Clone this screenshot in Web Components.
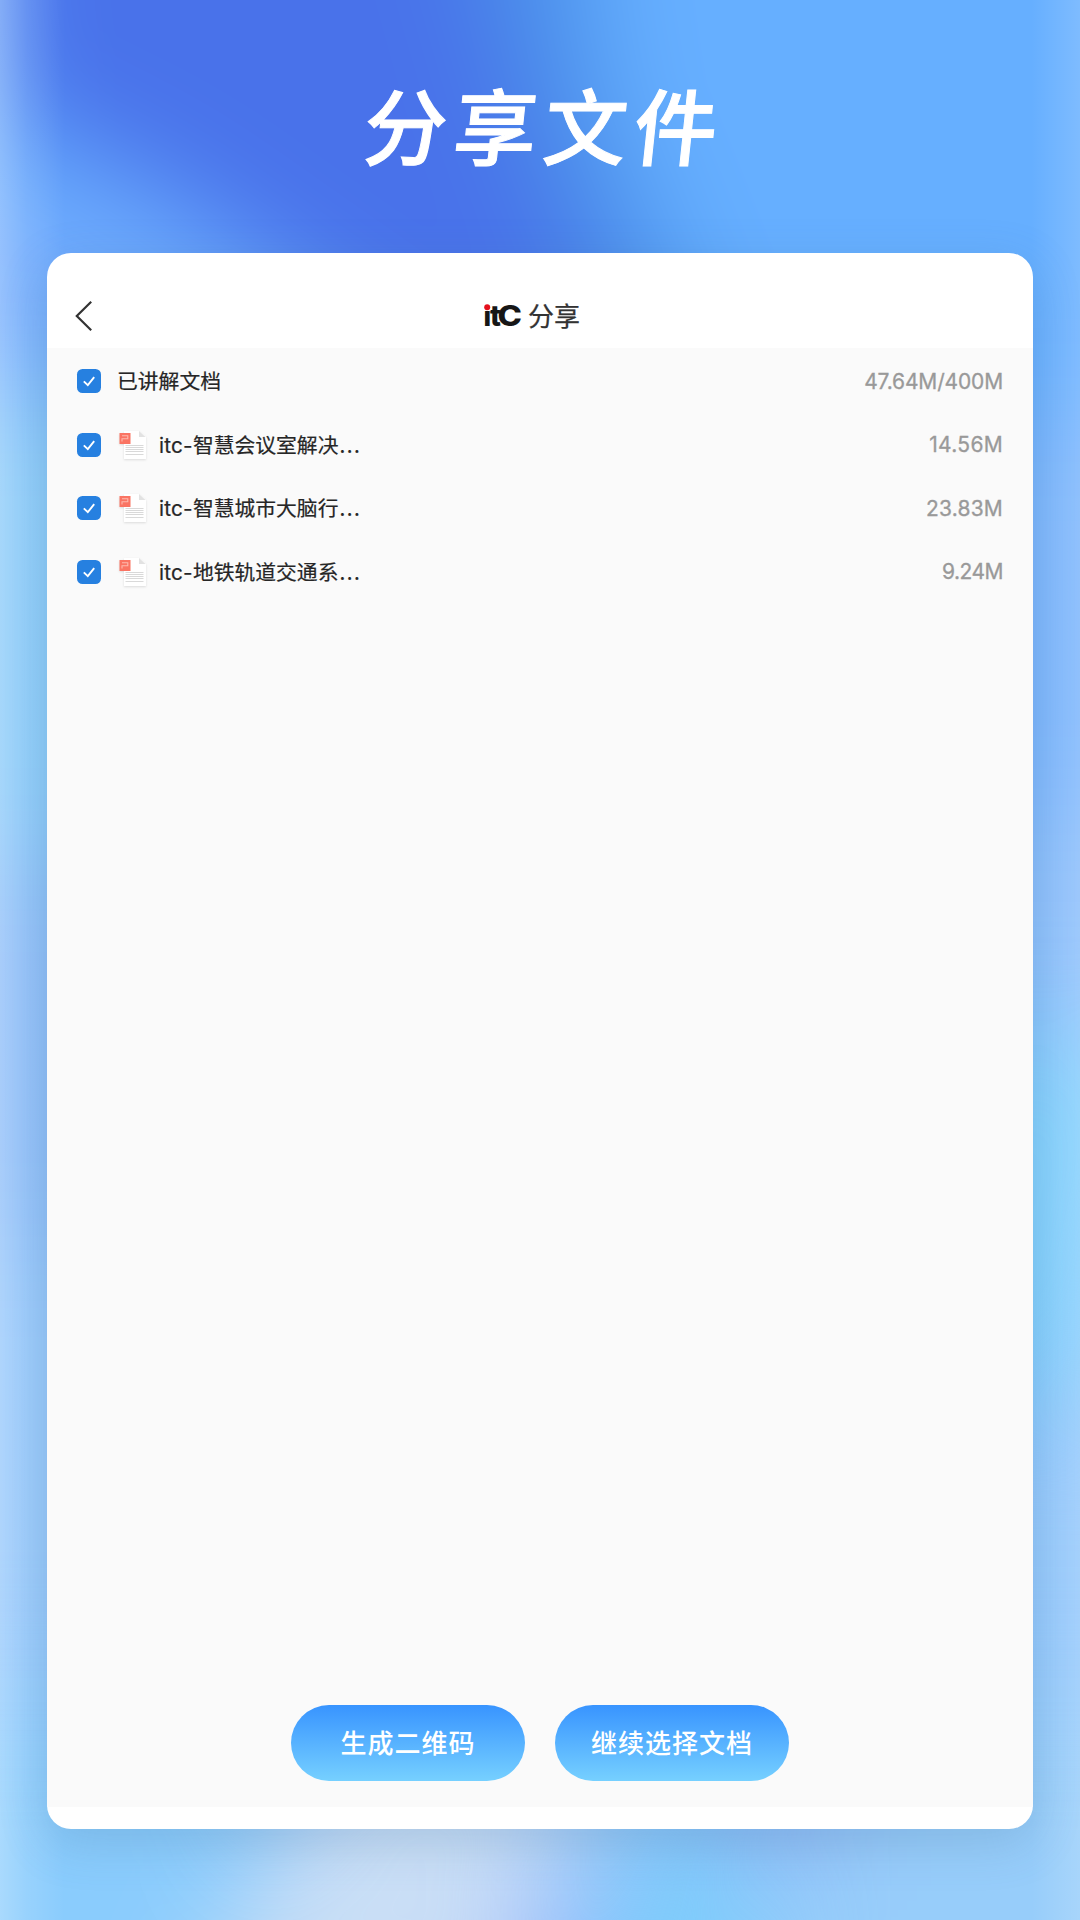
<!DOCTYPE html>
<html lang="zh-CN">
<head>
<meta charset="utf-8">
<title>分享文件</title>
<style>
  html, body { margin: 0; height: 100%; overflow: hidden; }
  body { font-family: "Noto Sans CJK SC", sans-serif; }
</style>
</head>
<body>
<share-page heading="分享文件">
  <share-panel>
    <share-row label="已讲解文档" size="47.64M/400M" spacing="-0.15"></share-row>
    <share-row file label="智慧会议室解决" size="14.56M" spacing="0.3"></share-row>
    <share-row file label="智慧城市大脑行" size="23.83M" spacing="0.2"></share-row>
    <share-row file label="地铁轨道交通系" size="9.24M" spacing="-0.5"></share-row>
    <pill-button slot="actions">生成二维码</pill-button>
    <pill-button slot="actions">继续选择文档</pill-button>
  </share-panel>
</share-page>

<script>
class BlurBackdrop extends HTMLElement {
  constructor() {
    super();
    this.attachShadow({ mode: 'open' }).innerHTML = `
      <style>
        :host { display: block; overflow: hidden; }
        svg { display: block; width: 100%; height: 100%; }
      </style>
      <svg viewBox="0 0 1080 1920" preserveAspectRatio="none">
        <defs>
          <filter id="soft" filterUnits="userSpaceOnUse" x="-400" y="-400" width="1900" height="2800" color-interpolation-filters="sRGB">
            <feGaussianBlur stdDeviation="54"/>
          </filter>
          <linearGradient id="edge">
            <stop offset="0" stop-color="#fff" stop-opacity=".27"/>
            <stop offset=".025" stop-color="#fff" stop-opacity=".12"/>
            <stop offset=".06" stop-color="#fff" stop-opacity="0"/>
            <stop offset=".955" stop-color="#fff" stop-opacity="0"/>
            <stop offset="1" stop-color="#fff" stop-opacity=".16"/>
          </linearGradient>
        </defs>
        <rect width="1080" height="1920" fill="#90c4fc"/>
        <g filter="url(#soft)">
          <path d="M-300-300H1400V1000H-300Z" fill="#66afff"/>
          <path d="M300-300H550L600 100 720 400H460Z" fill="#4a8fe9"/>
          <path d="M-20-300H400L510 100 620 400H460L160 190 0 110Z" fill="#4972ea"/>
          <path d="M-300 180L60 200 280 310V400H-300Z" fill="#70aafd"/>
          <path d="M-300 390H400V860H-300Z" fill="#86c9f9"/>
          <path d="M-300 860H400V1250H-300Z" fill="#89bbf8"/>
          <path d="M-300 1250H400V1680H-300Z" fill="#92c6fb"/>
          <path d="M-300 1700H260V2200H-300Z" fill="#8accfd"/>
          <path d="M900 420H1400V820H900Z" fill="#7cb6fd"/>
          <path d="M900 820H1400V1030H900Z" fill="#8cbffc"/>
          <path d="M900 1040H1190L1110 1400H900Z" fill="#82d0fd"/>
          <path d="M900 1430H1400V1680H900Z" fill="#94c8fc"/>
          <path d="M760 1700H1400V2200H760Z" fill="#97cdfa"/>
          <path d="M330 1720H600L500 2050H180Z" fill="#c9def6"/>
          <path d="M550 1850L570 2100H480Z" fill="#9ba8fb"/>
          <path d="M670 1780H760L720 2060H590Z" fill="#78cffb"/>
          <path d="M700 1740H850V1850H700Z" fill="#90b4f6"/>
        </g>
        <rect width="1080" height="1920" fill="url(#edge)"/>
      </svg>`;
  }
}
customElements.define('blur-backdrop', BlurBackdrop);

class SharePage extends HTMLElement {
  constructor() {
    super();
    this.attachShadow({ mode: 'open' }).innerHTML = `
      <style>
        :host {
          position: relative;
          display: flex;
          flex-direction: column;
          box-sizing: border-box;
          width: 1080px;
          height: 1920px;
          padding: 0 47px 91px;
        }
        blur-backdrop { position: absolute; inset: 0; z-index: -1; }
        h1 {
          flex: none;
          margin: 0;
          height: 253px;
          line-height: 247px;
          text-align: center;
          color: #fff;
          font-size: 83px;
          font-weight: 500;
          -webkit-text-stroke: 1px #fff;
          letter-spacing: 7px;
          text-indent: 9px;
          transform: skewX(-6deg);
        }
        ::slotted(share-panel) { flex: 1; }
      </style>
      <blur-backdrop></blur-backdrop>
      <h1></h1>
      <slot></slot>`;
    this.shadowRoot.querySelector('h1').textContent = this.getAttribute('heading');
  }
}
customElements.define('share-page', SharePage);

class ItcLogo extends HTMLElement {
  constructor() {
    super();
    this.attachShadow({ mode: 'open' }).innerHTML = `
      <style>
        :host { display: block; }
        svg { display: block; overflow: visible; }
        text { font-family: Inter, sans-serif; font-weight: 800; fill: #161616; }
      </style>
      <svg width="37" height="24" viewBox="0 0 37 24">
        <text y="22.2"><tspan x="-1.6" font-size="27">i</tspan><tspan x="5" font-size="28.5">t</tspan><tspan x="12.4" font-size="28.5" font-weight="800" textLength="24.5" lengthAdjust="spacingAndGlyphs">C</tspan></text>
        <rect x="-2" y="-2" width="8" height="8.4" fill="#fff"/>
        <circle cx="2.2" cy="3.2" r="3" fill="#e5101d"/>
      </svg>`;
  }
}
customElements.define('itc-logo', ItcLogo);

class SharePanel extends HTMLElement {
  constructor() {
    super();
    this.attachShadow({ mode: 'open' }).innerHTML = `
      <style>
        :host {
          display: flex;
          flex-direction: column;
          box-sizing: border-box;
          overflow: hidden;
          padding-bottom: 22px;
          border-radius: 24px;
          background: #fff;
          box-shadow: 0 14px 48px rgba(70, 115, 160, .24);
        }
        header {
          display: grid;
          grid-template-columns: 1fr auto 1fr;
          align-items: center;
          box-sizing: border-box;
          height: 95px;
          padding: 31px 43px 0 28px;
        }
        .title {
          display: flex;
          align-items: center;
          gap: 7px;
          color: #333;
          font-size: 26px;
          line-height: 36px;
        }
        .title span { margin: -2px 0 0 -1px; -webkit-text-stroke: .25px; }
        main {
          flex: 1;
          display: flex;
          flex-direction: column;
          padding: 1px 30px 26px 30px;
          background: #fafafa;
        }
        .list { flex: 1; }
        footer { display: flex; justify-content: center; gap: 30px; }
      </style>
      <header>
        <svg width="18" height="32" viewBox="0 0 18 32" fill="none" stroke="#333" stroke-width="2.2">
          <path d="M16.2 1.8L1.8 16L16.2 30.2"/>
        </svg>
        <div class="title"><itc-logo></itc-logo><span>分享</span></div>
      </header>
      <main>
        <div class="list"><slot></slot></div>
        <footer><slot name="actions"></slot></footer>
      </main>`;
  }
}
customElements.define('share-panel', SharePanel);

class CheckBox extends HTMLElement {
  constructor() {
    super();
    this.attachShadow({ mode: 'open' }).innerHTML = `
      <style>
        :host { display: block; width: 24px; height: 24px; border-radius: 5.5px; background: #2680e0; }
        svg { display: block; }
      </style>
      <svg width="24" height="24" viewBox="0 0 24 24" fill="none" stroke="#fff" stroke-width="1.9">
        <path d="M6.8 12.4L10.8 16.2L17.2 8.2"/>
      </svg>`;
  }
}
customElements.define('check-box', CheckBox);

class PptIcon extends HTMLElement {
  constructor() {
    super();
    this.attachShadow({ mode: 'open' }).innerHTML = `
      <style>
        :host { display: block; }
        svg { display: block; filter: drop-shadow(0 1px 1px rgba(0, 0, 0, .12)); }
      </style>
      <svg width="28" height="30" viewBox="0 0 28 30">
        <path d="M5 1H20L27 7V29H5Z" fill="#fff"/>
        <path d="M20 1L26.5 7H20Z" fill="#e2e2e2"/>
        <path d="M6.5 15.5H24.5M6.5 17.5H24.5M6.5 19.5H24.5M6.5 21.5H24.5M6.5 24.5H24.5" stroke="#d5d5d5" stroke-width=".9"/>
        <rect x=".5" y="3" width="11" height="11" fill="#fa7463"/>
        <path d="M3 11.5V8.8H8.8V5.8H3" fill="none" stroke="#fdb9ae" stroke-width="1.1"/>
      </svg>`;
  }
}
customElements.define('ppt-icon', PptIcon);

class ShareRow extends HTMLElement {
  constructor() {
    super();
    const isFile = this.hasAttribute('file');
    const label = this.getAttribute('label');
    this.attachShadow({ mode: 'open' }).innerHTML = `
      <style>
        :host { display: flex; align-items: center; height: 63.5px; }
        check-box { margin-top: 1px; }
        ppt-icon { margin: 1px 0 0 18px; }
        .name {
          flex: 1;
          margin: -1px 0 0 ${isFile ? 12 : 16}px;
          color: #262626;
          font-size: 20.8px;
          white-space: nowrap;
          -webkit-text-stroke: .2px;
        }
        .latin { font-family: Inter, sans-serif; letter-spacing: .2px; }
        .dots { letter-spacing: 1.5px; margin-left: 1px; }
        .size {
          margin-top: 1px;
          color: #999;
          font-family: Inter, sans-serif;
          font-size: 21px;
          -webkit-text-stroke: .3px;
        }
      </style>
      <check-box></check-box>
      ${isFile ? '<ppt-icon></ppt-icon>' : ''}
      <span class="name">${
        isFile
          ? `<span class="latin">itc-</span>${label}<span class="dots">...</span>`
          : label
      }</span>
      <span class="size">${this.getAttribute('size')}</span>`;
    this.shadowRoot.querySelector('.size').style.letterSpacing =
      `${this.getAttribute('spacing') || 0}px`;
  }
}
customElements.define('share-row', ShareRow);

class PillButton extends HTMLElement {
  constructor() {
    super();
    this.attachShadow({ mode: 'open' }).innerHTML = `
      <style>
        :host { display: block; }
        button {
          display: block;
          width: 234px;
          height: 76px;
          padding: 0 0 3px;
          border: none;
          border-radius: 38px;
          background: linear-gradient(#3894ff, #76d0ff);
          color: #fff;
          font: 500 26px "Noto Sans CJK SC", sans-serif;
          letter-spacing: 1px;
          cursor: pointer;
        }
      </style>
      <button><slot></slot></button>`;
  }
}
customElements.define('pill-button', PillButton);
</script>
</body>
</html>
